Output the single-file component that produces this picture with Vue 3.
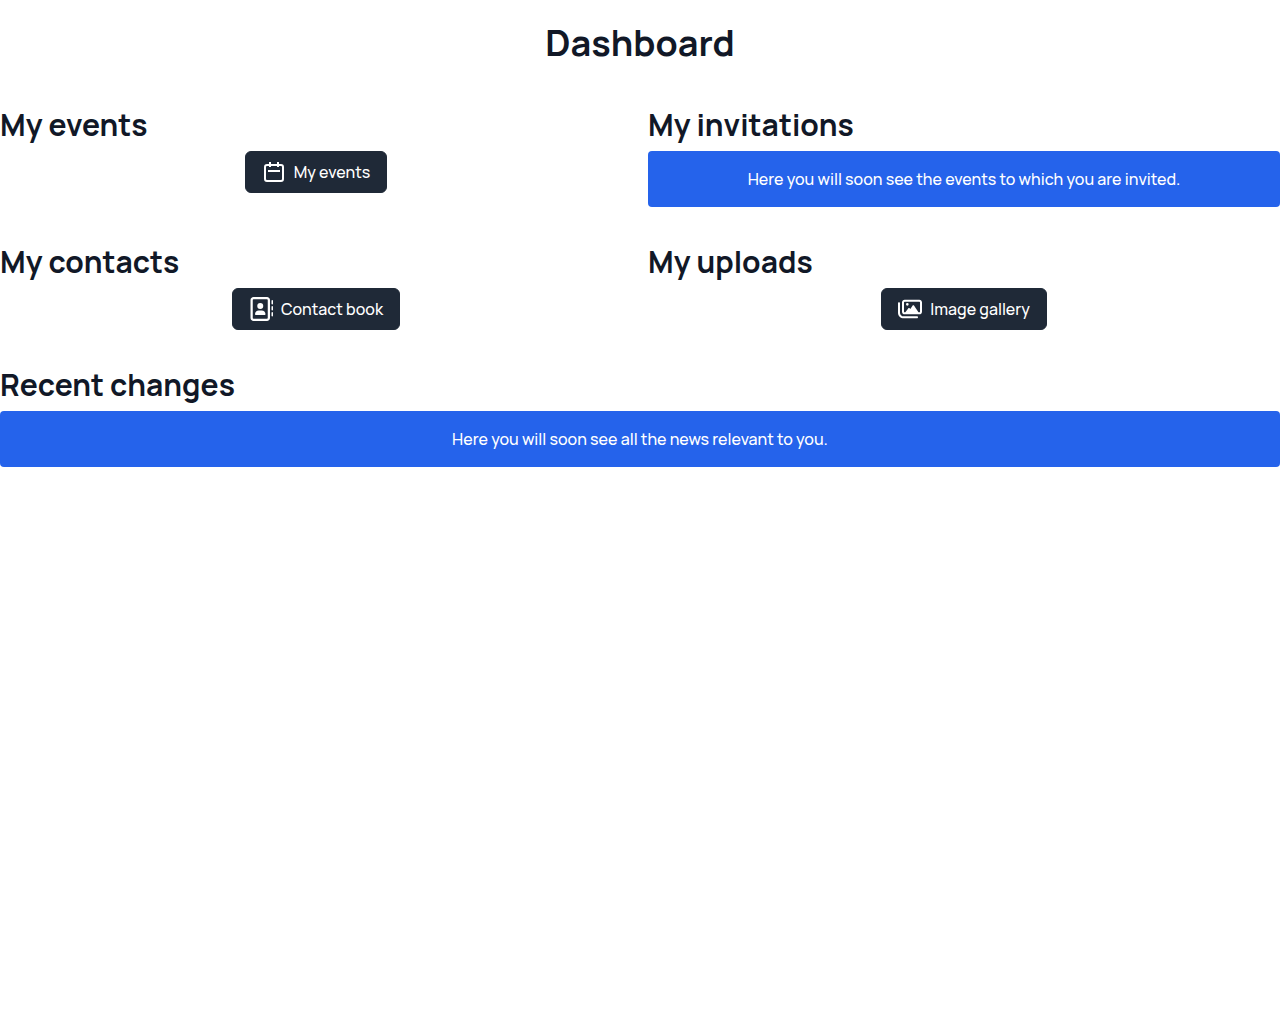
<script setup>
const icons = {
  contacts: {
    viewBox: '0 0 512 512',
    path: 'M384 48c8.8 0 16 7.2 16 16V448c0 8.8-7.2 16-16 16H96c-8.8 0-16-7.2-16-16V64c0-8.8 7.2-16 16-16H384zM96 0C60.7 0 32 28.7 32 64V448c0 35.3 28.7 64 64 64H384c35.3 0 64-28.7 64-64V64c0-35.3-28.7-64-64-64H96zM240 256a64 64 0 1 0 0-128 64 64 0 1 0 0 128zm-32 32c-44.2 0-80 35.8-80 80c0 8.8 7.2 16 16 16H336c8.8 0 16-7.2 16-16c0-44.2-35.8-80-80-80H208zM512 80c0-8.8-7.2-16-16-16s-16 7.2-16 16v64c0 8.8 7.2 16 16 16s16-7.2 16-16V80zM496 192c-8.8 0-16 7.2-16 16v64c0 8.8 7.2 16 16 16s16-7.2 16-16V208c0-8.8-7.2-16-16-16zm16 144c0-8.8-7.2-16-16-16s-16 7.2-16 16v64c0 8.8 7.2 16 16 16s16-7.2 16-16V336z',
  },
  images: {
    viewBox: '0 0 576 512',
    path: 'M160 80H512c8.8 0 16 7.2 16 16V320c0 8.8-7.2 16-16 16H490.8L388.1 178.7c-4.4-6.8-12-10.9-20.1-10.9s-15.7 4.1-20.1 10.9l-52.2 79.8-12.4-16.9c-4.5-6.2-11.7-9.8-19.4-9.8s-14.8 3.6-19.4 9.8L175.6 336H160c-8.8 0-16-7.2-16-16V96c0-8.8 7.2-16 16-16zM96 96V320c0 35.3 28.7 64 64 64H512c35.3 0 64-28.7 64-64V96c0-35.3-28.7-64-64-64H160c-35.3 0-64 28.7-64 64zM48 120c0-13.3-10.7-24-24-24S0 106.7 0 120V344c0 75.1 60.9 136 136 136H456c13.3 0 24-10.7 24-24s-10.7-24-24-24H136c-48.6 0-88-39.4-88-88V120zm208 24a32 32 0 1 0 -64 0 32 32 0 1 0 64 0z',
  },
}
</script>

<template>
  <main class="dashboard">
    <h1>Dashboard</h1>
    <div class="sections">
      <section>
        <h2>My events</h2>
        <div class="actions">
          <button type="button" class="action">
            <svg class="icon" viewBox="0 0 24 24" fill="none" stroke="currentColor" stroke-width="2" stroke-linejoin="round" aria-hidden="true">
              <rect x="3" y="5" width="18" height="16" rx="2" />
              <path d="M8 2v5M16 2v5M6 11h12" />
            </svg>
            My events
          </button>
        </div>
      </section>
      <section>
        <h2>My invitations</h2>
        <p class="notice">Here you will soon see the events to which you are invited.</p>
      </section>
      <section>
        <h2>My contacts</h2>
        <div class="actions">
          <button type="button" class="action">
            <svg class="icon" :viewBox="icons.contacts.viewBox" fill="currentColor" aria-hidden="true">
              <path :d="icons.contacts.path" />
            </svg>
            Contact book
          </button>
        </div>
      </section>
      <section>
        <h2>My uploads</h2>
        <div class="actions">
          <button type="button" class="action">
            <svg class="icon" :viewBox="icons.images.viewBox" fill="currentColor" aria-hidden="true">
              <path :d="icons.images.path" />
            </svg>
            Image gallery
          </button>
        </div>
      </section>
      <section class="wide">
        <h2>Recent changes</h2>
        <p class="notice">Here you will soon see all the news relevant to you.</p>
      </section>
    </div>
  </main>
</template>

<style>
body {
  margin: 0;
  background: #fff;
}
</style>

<style scoped>
.dashboard {
  font-family: Manrope, Inter, sans-serif;
  font-size: 16px;
  line-height: 24px;
  font-weight: 500;
  color: #111827;
}

h1 {
  margin: 0;
  padding: 16px 0 32px;
  font-size: 36px;
  line-height: 54px;
  font-weight: 700;
  text-align: center;
}

h2 {
  margin: 0 0 4px;
  font-size: 30px;
  line-height: 45px;
  font-weight: 700;
}

.sections {
  display: grid;
  grid-template-columns: repeat(2, minmax(0, 1fr));
  gap: 32px 16px;
}

.wide {
  grid-column: 1 / -1;
}

.actions {
  display: flex;
  justify-content: center;
}

.action {
  display: flex;
  align-items: center;
  gap: 8px;
  padding: 8px 16px;
  border: 1px solid #1f2937;
  border-radius: 6px;
  background: #1f2937;
  color: #fff;
  font: inherit;
  cursor: pointer;
}

.icon {
  width: 24px;
  height: 24px;
  flex: none;
}

.notice {
  margin: 0;
  padding: 16px;
  border-radius: 4px;
  background: #2563eb;
  color: #fff;
  text-align: center;
}
</style>
